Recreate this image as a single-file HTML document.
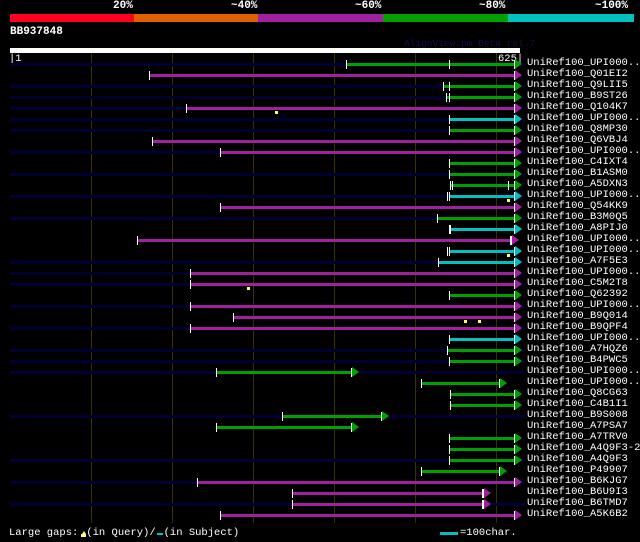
<!DOCTYPE html><html><head><style>
body{margin:0;background:#000;width:640px;height:542px;overflow:hidden;position:relative;font-family:"Liberation Mono",monospace;color:#fff}
div{position:absolute}
.t{font-size:10.5px;line-height:11px;white-space:pre}
</style></head><body>
<div class="t" style="left:0;top:1px;width:640px;height:12px;font-weight:bold;font-size:11px"><span style="position:absolute;left:113px">20%</span><span style="position:absolute;left:231px">~40%</span><span style="position:absolute;left:355px">~60%</span><span style="position:absolute;left:479px">~80%</span><span style="position:absolute;left:595px">~100%</span></div>
<div style="left:10px;top:14px;width:124px;height:8px;background:#ff0020"></div>
<div style="left:134px;top:14px;width:124px;height:8px;background:#e06000"></div>
<div style="left:258px;top:14px;width:125px;height:8px;background:#a020a0"></div>
<div style="left:383px;top:14px;width:125px;height:8px;background:#00a000"></div>
<div style="left:508px;top:14px;width:126px;height:8px;background:#00c0c0"></div>
<div class="t" style="left:10px;top:27px;font-weight:bold;font-size:11px">BB937848</div>
<div class="t" style="left:404px;top:38px;color:#101048;font-size:9.5px">AlignView.pm Beta rel.7</div>
<div style="left:10px;top:48px;width:510px;height:5px;background:#fff"></div>
<div class="t" style="left:9px;top:54px">|1</div>
<div class="t" style="left:498px;top:54px">625|</div>
<div id="g"></div>
<div class="t" style="left:9px;top:528px">Large gaps:<span style="display:inline-block;width:8px"></span>(in Query)/<span style="display:inline-block;width:8px"></span>(in Subject)</div>
<div style="left:82px;top:531px;width:0;height:0;border-left:2px solid transparent;border-right:2px solid transparent;border-bottom:3px solid #ffff80"></div>
<div style="left:81px;top:534px;width:5px;height:3px;background:#ffff80"></div>
<div style="left:157px;top:533px;width:6px;height:2px;background:#00c0c0"></div>
<div style="left:440px;top:532px;width:18px;height:3px;background:#00c0c0"></div>
<div class="t" style="left:460px;top:528px">=100char.</div>
<script>
var C={g:'#00a000',m:'#a020a0',c:'#00c0c0'};
var R=[
['UPI000..',1,'g',346,515,[346,449]],['Q01EI2',0,'m',149,515,[149]],['Q9LII5',1,'g',443,515,[443,449]],['B9ST26',1,'g',446,515,[446,449]],
['Q104K7',1,'m',186,515,[186],[276]],['UPI000..',1,'c',449,515,[449]],['Q8MP30',1,'g',449,515,[449]],['Q6VBJ4',0,'m',152,515,[152]],
['UPI000..',1,'m',220,515,[220]],['C4IXT4',0,'g',449,515,[449]],['B1ASM0',1,'g',449,515,[449]],['A5DXN3',0,'g',451,515,[450,452,508]],
['UPI000..',1,'c',449,515,[447,449],[508]],['Q54KK9',0,'m',220,515,[220]],['B3M0Q5',1,'g',437,515,[437]],['A8PIJ0',0,'c',449,515,[449,450]],
['UPI000..',0,'m',137,512,[137,510]],['UPI000..',0,'c',449,515,[447,449],[508]],['A7F5E3',1,'c',438,515,[438]],['UPI000..',1,'m',190,515,[190]],
['C5M2T8',1,'m',190,515,[190],[248]],['Q62392',0,'g',449,515,[449]],['UPI000..',1,'m',190,515,[190]],['B9Q014',0,'m',233,515,[233],[465,479]],
['B9QPF4',1,'m',190,515,[190]],['UPI000..',0,'c',449,515,[449]],['A7HQZ6',1,'g',447,515,[447]],['B4PWC5',1,'g',449,515,[449]],
['UPI000..',1,'g',216,352,[216]],['UPI000..',0,'g',421,500,[421]],['Q8CG63',0,'g',450,515,[450]],['C4B1I1',0,'g',450,515,[450]],
['B9S008',1,'g',282,382,[282]],['A7PSA7',0,'g',216,352,[216]],['A7TRV0',0,'g',449,515,[449]],['A4Q9F3-2',0,'g',449,515,[449]],
['A4Q9F3',1,'g',449,515,[449]],['P49907',0,'g',421,500,[421]],['B6KJG7',1,'m',197,515,[197]],['B6U9I3',0,'m',292,484,[292,482]],
['B6TMD7',1,'m',292,484,[292,482]],['A5K6B2',0,'m',220,515,[220]]];
var h='';
[91,172,253,334,415,496].forEach(function(x){h+='<div style="left:'+x+'px;top:53px;width:1px;height:470px;background:#333300"></div>'});
R.forEach(function(r,i){var y=64+i*11;
if(r[1])h+='<div style="left:10px;top:'+(y-1)+'px;width:515px;height:3px;background:#000033"></div>';
h+='<div style="left:'+r[3]+'px;top:'+(y-1)+'px;width:'+(r[4]-r[3])+'px;height:3px;background:'+C[r[2]]+'"></div>';
h+='<div style="left:'+r[4]+'px;top:'+(y-5)+'px;width:0;height:0;border-top:5px solid transparent;border-bottom:5px solid transparent;border-left:7px solid '+C[r[2]]+'"></div>';
h+='<div style="left:'+(r[4]-1)+'px;top:'+(y-4)+'px;width:1px;height:9px;background:#fff"></div>';
r[5].forEach(function(x){h+='<div style="left:'+x+'px;top:'+(y-4)+'px;width:1px;height:9px;background:#fff"></div>'});
(r[6]||[]).forEach(function(x){h+='<div style="left:'+(x-1)+'px;top:'+(y+3)+'px;width:3px;height:3px;background:#ffff60"></div>'});
h+='<div class="t" style="left:527px;top:'+(y-6)+'px">UniRef100_'+r[0]+'</div>';});
document.getElementById('g').innerHTML=h;
</script>
</body></html>
